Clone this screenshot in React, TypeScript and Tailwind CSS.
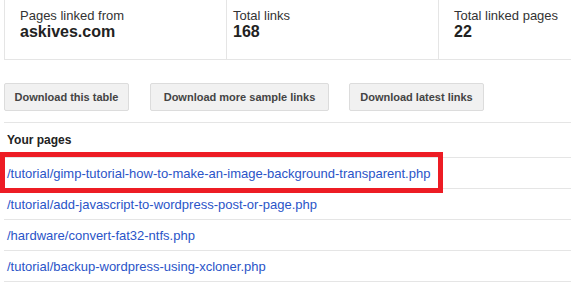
const stats = [
  { label: "Pages linked from", value: "askives.com", cls: "w-[221px] pl-[15px]" },
  { label: "Total links", value: "168", cls: "w-[212px] border-l pl-[6px]" },
  { label: "Total linked pages", value: "22", cls: "flex-1 border-l pl-[15px]" },
];

const buttons = [
  { label: "Download this table", w: "w-[125px]" },
  { label: "Download more sample links", w: "w-[179px] ml-[21px]" },
  { label: "Download latest links", w: "w-[135px] ml-[20px]" },
];

const pages = [
  "/tutorial/gimp-tutorial-how-to-make-an-image-background-transparent.php",
  "/tutorial/add-javascript-to-wordpress-post-or-page.php",
  "/hardware/convert-fat32-ntfs.php",
  "/tutorial/backup-wordpress-using-xcloner.php",
];

export default function App() {
  return (
    <div className="h-[291px] w-[571px] overflow-hidden bg-white pl-[4px] font-['Liberation_Sans',Arial,sans-serif]">
      <div className="flex h-[60px] border-b border-l border-[#e5e5e5]">
        {stats.map((s) => (
          <div key={s.label} className={`border-[#e5e5e5] pt-[8px] ${s.cls}`}>
            <p className="text-[13px] leading-[15px] text-[#333]">{s.label}</p>
            <p className="text-[16px] font-bold leading-[18px] text-[#222]">{s.value}</p>
          </div>
        ))}
      </div>

      <div className="mt-[23px] flex">
        {buttons.map((b) => (
          <button
            key={b.label}
            className={`h-[28px] rounded-[2px] border border-[#dcdcdc] bg-[#f1f1f1] text-[11px] font-bold text-[#444] ${b.w}`}
          >
            {b.label}
          </button>
        ))}
      </div>

      <div className="mt-[11px] h-[36px] border-y border-[#e5e5e5] pl-[3px] pt-[10px] text-[12px] leading-[14px]">
        <p className="font-bold text-[#222]">Your pages</p>
      </div>

      {pages.map((p, i) => (
        <div
          key={p}
          className="relative h-[31px] border-b border-[#e5e5e5] pl-[3px] pt-[8px] text-[13px] leading-[15px]"
        >
          <a href="#" className="block text-[#2a54c8]">
            {p}
          </a>
          {i === 0 && (
            <div className="absolute -left-[4px] -top-[6px] h-[41px] w-[443px] border-[5px] border-[#ed1c24]" />
          )}
        </div>
      ))}
    </div>
  );
}
